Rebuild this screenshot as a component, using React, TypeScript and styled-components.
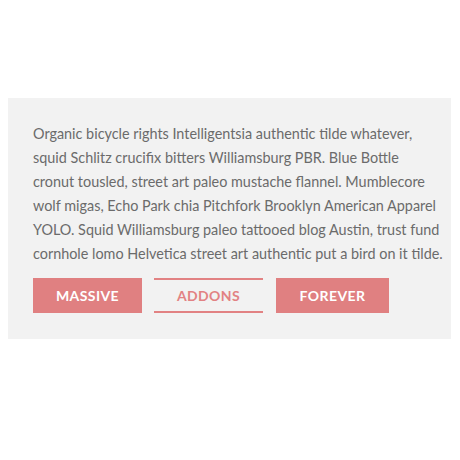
import React from 'react'
import styled, { createGlobalStyle } from 'styled-components'

const GlobalStyle = createGlobalStyle`
  body {
    margin: 0;
    background: #fff;
    font-family: 'Lato', 'Open Sans', sans-serif;
  }
`

const Page = styled.div`
  width: 460px;
  height: 460px;
  padding: 98px 9px 0 8px;
  box-sizing: border-box;
`

const Panel = styled.section`
  background: #f2f2f2;
  padding: 24px 25px 25px;
  height: 241px;
  box-sizing: border-box;
`

const Text = styled.p`
  margin: 0;
  font-size: 14.4px;
  line-height: 24px;
  color: #6b6b6b;
  white-space: nowrap;
`

const Actions = styled.div`
  display: flex;
  gap: 12px;
  margin-top: 12px;
`

const Button = styled.button<{ $outline?: boolean; $w: number }>`
  width: ${({ $w }) => $w}px;
  height: 35px;
  box-sizing: border-box;
  font-family: inherit;
  font-size: 14px;
  font-weight: 700;
  letter-spacing: 0.4px;
  text-transform: uppercase;
  cursor: pointer;
  border: 0;
  padding: 0;
  color: ${({ $outline }) => ($outline ? '#e28283' : '#fff')};
  background: ${({ $outline }) => ($outline ? 'transparent' : '#e08081')};
  border-top: ${({ $outline }) => ($outline ? '2px solid #e28283' : '0')};
  border-bottom: ${({ $outline }) => ($outline ? '2px solid #e28283' : '0')};
  margin-right: ${({ $outline }) => ($outline ? '1px' : '0')};
`

const lines = [
  'Organic bicycle rights Intelligentsia authentic tilde whatever,',
  'squid Schlitz crucifix bitters Williamsburg PBR. Blue Bottle',
  'cronut tousled, street art paleo mustache flannel. Mumblecore',
  'wolf migas, Echo Park chia Pitchfork Brooklyn American Apparel',
  'YOLO. Squid Williamsburg paleo tattooed blog Austin, trust fund',
  'cornhole lomo Helvetica street art authentic put a bird on it tilde.',
]

export default function App() {
  return (
    <>
      <GlobalStyle />
      <Page>
        <Panel>
          <Text>
            {lines.map((l, i) => (
              <React.Fragment key={i}>
                {l}
                {i < lines.length - 1 && <br />}
              </React.Fragment>
            ))}
          </Text>
          <Actions>
            <Button $w={109}>Massive</Button>
            <Button $w={109} $outline>Addons</Button>
            <Button $w={113}>Forever</Button>
          </Actions>
        </Panel>
      </Page>
    </>
  )
}
